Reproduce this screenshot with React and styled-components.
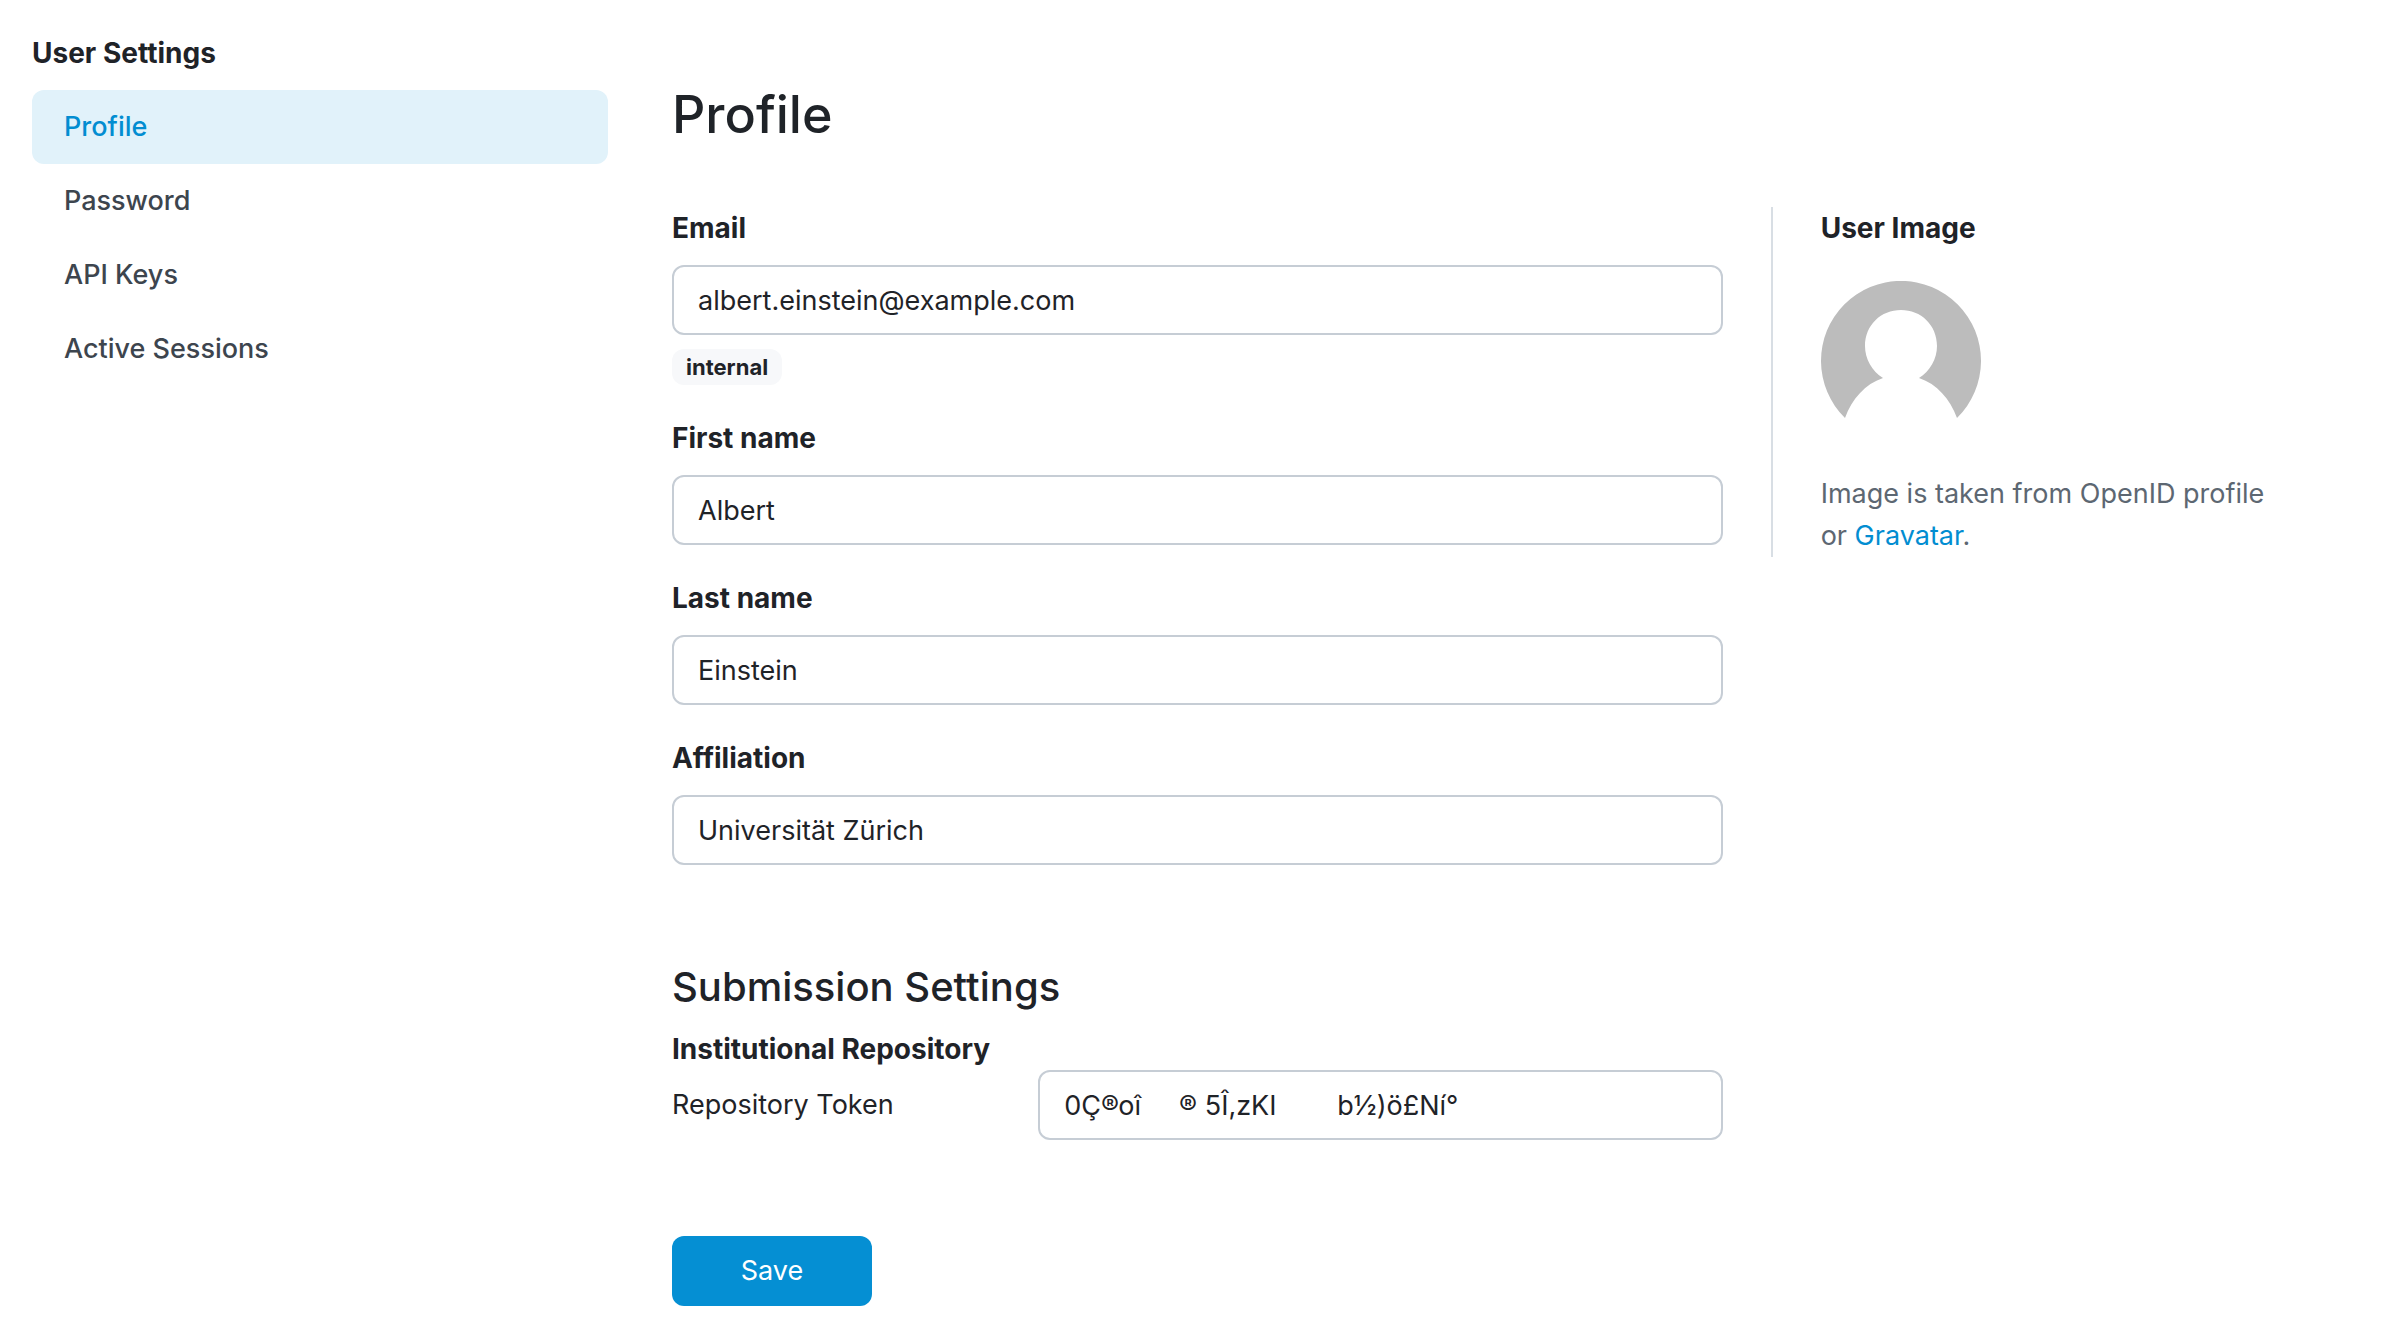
import { useState } from "react";
import styled, { createGlobalStyle } from "styled-components";

const GlobalStyle = createGlobalStyle`
  * {
    box-sizing: border-box;
  }

  body {
    margin: 0;
    background-color: #ffffff;
    color: #1f2328;
    font-family: Inter, "Liberation Sans", sans-serif;
    font-size: 27px;
    line-height: 42px;
  }
`;

const Container = styled.div`
  display: flex;
  align-items: flex-start;
  gap: 64px;
  padding: 32px;
`;

const Sidebar = styled.nav`
  flex: 0 0 576px;
`;

const SidebarTitle = styled.h2`
  margin: 0 0 16px;
  font-size: 28px;
  font-weight: 700;
  line-height: 42px;
`;

const NavLink = styled.a`
  display: block;
  padding: 16px 32px;
  border-radius: 12px;
  color: ${(props) => (props.$active ? "#028dd1" : "#3d454e")};
  background-color: ${(props) => (props.$active ? "#e1f2fa" : "transparent")};
  font-weight: 500;
  text-decoration: none;
`;

const Main = styled.main`
  flex: 1;
  padding: 48px 96px 0 0;
`;

const Title = styled.h1`
  margin: 0 0 58px;
  font-size: 52px;
  font-weight: 500;
  line-height: 69px;
`;

const Columns = styled.div`
  display: grid;
  grid-template-columns: repeat(12, 1fr);
  column-gap: 48px;
  align-items: start;
`;

const Form = styled.form`
  grid-column: span 8;
  display: flex;
  flex-direction: column;
  gap: 96px;
`;

const FieldList = styled.div`
  display: flex;
  flex-direction: column;
  gap: 32px;
`;

const Field = styled.div`
  display: flex;
  flex-direction: column;
  align-items: flex-start;

  label {
    margin-bottom: 16px;
    font-size: 28px;
    font-weight: 700;
  }
`;

const Input = styled.input`
  width: 100%;
  height: 70px;
  padding: 0 24px;
  border: 2px solid #c6cdd5;
  border-radius: 12px;
  background-color: #ffffff;
  color: inherit;
  font: inherit;
`;

const Badge = styled.span`
  margin-top: 14px;
  padding: 0 14px;
  border-radius: 12px;
  background-color: #f7f8fa;
  font-size: 22px;
  font-weight: 700;
  line-height: 36px;
`;

const SectionTitle = styled.h2`
  margin: 0 0 16px;
  font-size: 40px;
  font-weight: 500;
  line-height: 51px;
`;

const GroupTitle = styled.h3`
  margin: 0;
  font-size: 28px;
  font-weight: 700;
  line-height: 42px;
`;

const SettingRow = styled.div`
  display: grid;
  grid-template-columns: repeat(12, 1fr);
  column-gap: 48px;
  align-items: center;

  label {
    grid-column: span 4;
  }

  input {
    grid-column: span 8;
  }
`;

const SaveButton = styled.button`
  align-self: flex-start;
  width: 200px;
  height: 70px;
  border: none;
  border-radius: 12px;
  background-color: #058fd3;
  color: white;
  font: inherit;
  cursor: pointer;
`;

const UserImage = styled.aside`
  grid-column: span 4;
  display: flex;
  flex-direction: column;
  gap: 32px;
  padding-left: 48px;
  border-left: 2px solid #d8dee4;

  p {
    margin: 0;
    color: #5d6772;
  }

  a {
    color: #028dd1;
    text-decoration: none;
  }
`;

const Avatar = styled.svg`
  width: 160px;
  height: 160px;
`;

const links = ["Profile", "Password", "API Keys", "Active Sessions"];

const fields = [
  {
    name: "email",
    label: "Email",
    badge: "internal",
  },
  {
    name: "firstName",
    label: "First name",
  },
  {
    name: "lastName",
    label: "Last name",
  },
  {
    name: "affiliation",
    label: "Affiliation",
  },
];

const App = () => {
  const [user, setUser] = useState({
    email: "albert.einstein@example.com",
    firstName: "Albert",
    lastName: "Einstein",
    affiliation: "Universität Zürich",
    token: "0Ç®oî\u00a0\u00a0\u00a0\u00a0 ® 5Î,zKI\u00a0\u00a0\u00a0\u00a0\u00a0\u00a0\u00a0 b½)ö£Ní°",
  });

  const handleChange = (e) => {
    setUser({ ...user, [e.target.name]: e.target.value });
  };

  return (
    <>
      <GlobalStyle />
      <Container>
        <Sidebar>
          <SidebarTitle>User Settings</SidebarTitle>
          {links.map((link) => (
            <NavLink key={link} href="#" $active={link === "Profile"}>
              {link}
            </NavLink>
          ))}
        </Sidebar>

        <Main>
          <Title>Profile</Title>
          <Columns>
            <Form onSubmit={(e) => e.preventDefault()}>
              <FieldList>
                {fields.map(({ name, label, badge }) => (
                  <Field key={name}>
                    <label htmlFor={name}>{label}</label>
                    <Input id={name} name={name} value={user[name]} onChange={handleChange} />
                    {badge && <Badge>{badge}</Badge>}
                  </Field>
                ))}
              </FieldList>

              <section>
                <SectionTitle>Submission Settings</SectionTitle>
                <GroupTitle>Institutional Repository</GroupTitle>
                <SettingRow>
                  <label htmlFor="token">Repository Token</label>
                  <Input id="token" name="token" value={user.token} onChange={handleChange} />
                </SettingRow>
              </section>

              <SaveButton type="submit">Save</SaveButton>
            </Form>

            <UserImage>
              <GroupTitle>User Image</GroupTitle>
              <Avatar viewBox="0 0 160 160" role="img" aria-label="User">
                <path
                  d="M24 137A80 80 0 1 1 136 137C129 118 116 103 98 97C109 90 116 78 116 65C116 44 100 29 80 29C60 29 44 44 44 65C44 78 51 90 62 97C44 103 31 118 24 137Z"
                  fill="#bcbcbc"
                />
              </Avatar>
              <p>
                Image is taken from OpenID profile or <a href="#">Gravatar</a>.
              </p>
            </UserImage>
          </Columns>
        </Main>
      </Container>
    </>
  );
};

export default App;
